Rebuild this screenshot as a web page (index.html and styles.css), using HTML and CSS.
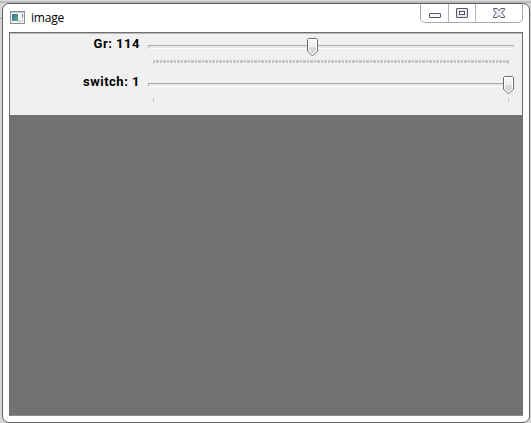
FILE: index.html
```html
<!DOCTYPE html>
<html lang="en">
<head>
<meta charset="utf-8">
<title>image</title>
<link rel="stylesheet" href="styles.css">
</head>
<body>
<main class="window">
  <header class="titlebar">
    <svg class="app-icon" width="15" height="13" viewBox="0 0 15 13">
      <defs><linearGradient id="screen" x1="0" y1="0" x2="1" y2="1"><stop offset="0" stop-color="#3c6f9c"/><stop offset="1" stop-color="#55b084"/></linearGradient></defs>
      <rect x=".5" y=".5" width="14" height="12" fill="#f5f5f5" stroke="#8d8d8d"/>
      <path d="M1 1.5h13" stroke="#c8c8c8"/>
      <rect x="2" y="3" width="6" height="7" fill="url(#screen)"/>
      <path d="M12.5 3v2" stroke="#4f83b4"/><path d="M12.5 5v2" stroke="#61ad8c"/><path d="M8 10h3M12 10h1" stroke="#ccc" stroke-width="2"/>
    </svg>
    <h1 class="title">image</h1>
    <div class="controls">
      <button class="control minimize" aria-label="Minimize"><svg width="12" height="5"><rect x=".5" y=".5" width="11" height="4" rx=".5" fill="#f5f5f5" stroke="#55566b"/></svg></button>
      <button class="control maximize" aria-label="Maximize"><svg width="12" height="10"><rect x=".5" y=".5" width="11" height="9" rx=".5" fill="#e9e9ec" stroke="#55566b"/><rect x="3.5" y="3.5" width="5" height="3" fill="#fff" stroke="#55566b"/></svg></button>
      <button class="control close" aria-label="Close"><svg width="12" height="10"><path d="M.5.5h3.500L6 2.500 8 .5h3.500v1.300L8.800 5l2.700 3.200v1.300H8L6 7.500 4 9.500H.5V8.200L3.200 5 .5 1.800z" fill="#eeeef1" stroke="#55566b"/></svg></button>
    </div>
  </header>
  <section class="client">
    <div class="panel">
      <div class="row">
        <span class="label">Gr: 114</span>
        <div class="slider"><div class="track"></div><div class="ticks dense"></div>
          <svg class="thumb middle" width="11" height="19"><use href="#thumb"/></svg></div>
      </div>
      <div class="row">
        <span class="label">switch: 1</span>
        <div class="slider"><div class="track"></div><div class="ticks"></div>
          <svg class="thumb end" width="11" height="19"><use href="#thumb"/></svg></div>
      </div>
    </div>
    <div class="canvas"></div>
  </section>
</main>
<svg class="symbols"><defs>
  <linearGradient id="face" x1="0" y1="0" x2="0" y2="1"><stop offset="0" stop-color="#f6f6f6"/><stop offset=".5" stop-color="#ededed"/><stop offset=".51" stop-color="#dedede"/><stop offset="1" stop-color="#cfcfcf"/></linearGradient>
  <g id="thumb"><path d="M1.500.5h8l1 1v11.500l-5 5-5-5V1.500z" fill="#fff" stroke="#6b6b6b"/><path d="M2 2h7v10.500L5.500 16 2 12.500z" fill="url(#face)"/></g>
</defs></svg>
</body>
</html>
```

FILE: styles.css
```css
* { box-sizing: border-box; }
body {
  margin: 0;
  height: 423px;
  padding: 3px 1px 0 2px;
  overflow: hidden;
  background:
    linear-gradient(#a8a8a8, #a8a8a8) 0 18px / 2px 1px no-repeat,
    linear-gradient(#e2e2e2, #a8a8a8) 0 0 / 100% 3px no-repeat,
    #d6d6d6;
}
.window {
  display: flex;
  flex-direction: column;
  height: 420px;
  padding: 0 6px 6px;
  border: 1px solid #606060;
  border-radius: 7px;
  background: #fff;
}
.titlebar { display: flex; height: 28px; flex: none; }
.app-icon { margin: 7px 0 0 1px; }
.title {
  margin: 6px 0 0 6px;
  font: 12px/16px "Open Sans", "Noto Sans", sans-serif;
  letter-spacing: -0.2px;
  color: #000;
}
.controls {
  display: flex;
  width: 103px;
  height: 20px;
  margin: -1px 0 0 auto;
  border: 1px solid #a9a9a9;
  border-top-color: #606060;
  border-radius: 0 0 5px 5px;
}
.control {
  display: flex;
  justify-content: center;
  padding: 0;
  border: 0;
  border-right: 1px solid #b5b5b5;
  background: none;
}
.minimize { width: 28px; padding-top: 9px; }
.maximize { width: 27px; padding-top: 4px; }
.close { flex: 1; padding-top: 4px; border-right: 0; }
.client {
  display: flex;
  flex-direction: column;
  flex: 1;
  border: 1px solid #707070;
  border-bottom-color: #8c8c8c;
}
.panel {
  height: 82px;
  flex: none;
  border-top: 1px solid #b8b8b8;
  background: #f0f0f0;
}
.row { display: flex; height: 38px; }
.label {
  width: 130px;
  padding-top: 1px;
  text-align: right;
  font: bold 13px/18px Roboto, sans-serif;
  letter-spacing: 0.5px;
  color: #000;
}
.slider {
  position: relative;
  width: 366px;
  margin-left: 8px;
  padding-top: 11px;
}
.track {
  height: 4px;
  border-top: 1px solid #a7adad;
  border-left: 1px solid #b5b8b8;
  border-bottom: 1px solid #fff;
  background: #e5ebe8;
}
.ticks {
  height: 4px;
  margin: 11px 5px 0;
  border: solid #c4c4c4;
  border-width: 0 1px;
}
.dense { background: repeating-linear-gradient(90deg, #c4c4c4 0 1px, #f0f0f0 1px 2px, #c4c4c4 2px 5px, #f0f0f0 5px 6px, #c4c4c4 6px 7px) 0 0 / 100% 3px no-repeat; }
.thumb { position: absolute; top: 4px; }
.middle { left: 159px; }
.end { left: 355px; }
.canvas { flex: 1; background: #727272; }
.symbols { position: absolute; width: 0; height: 0; }
```
